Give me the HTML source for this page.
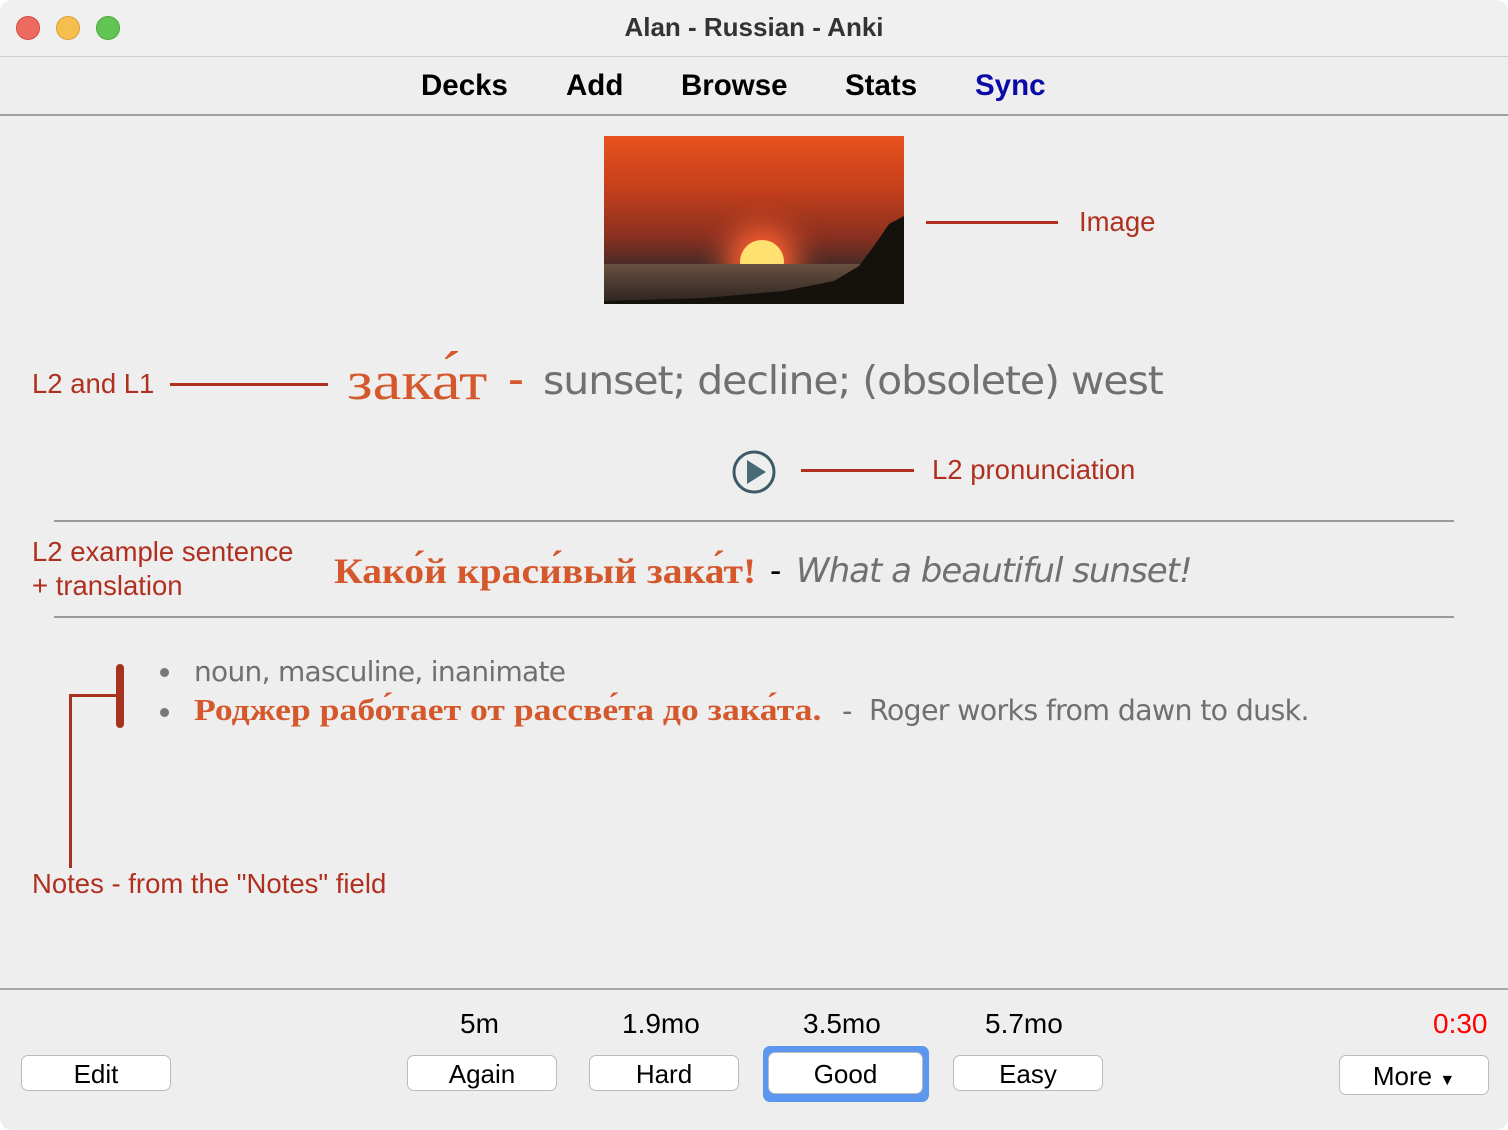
<!DOCTYPE html>
<html><head><meta charset="utf-8"><style>
body{margin:0;width:1508px;height:1130px;background:#fff;overflow:hidden;font-family:"Liberation Sans",sans-serif}
.win{position:absolute;left:0;top:0;width:1508px;height:1130px;background:#eeeeee;border-radius:12px;overflow:hidden}
.t{position:absolute;white-space:nowrap;transform-origin:0 0}
.ann{color:#b03020;font-size:27.5px}
.line{position:absolute;background:#b03020;height:3px}
.gray{color:#707070;font-family:"DejaVu Sans","Liberation Sans",sans-serif}
.or{color:#d4582c;font-family:"Liberation Serif",serif}
.btn{position:absolute;height:36px;background:#fff;border:1px solid #bbb;border-radius:7px;font-size:26px;text-align:center;line-height:36px;box-sizing:border-box}
</style></head><body><div class="win">
<div style="position:absolute;left:0;top:0;width:1508px;height:56px;background:#f0f0f0;border-bottom:1px solid #cfcfcf"></div>
<div style="position:absolute;left:16px;top:16px;width:24px;height:24px;border-radius:50%;background:#ee6a5f;border:1px solid #d24b40;box-sizing:border-box"></div>
<div style="position:absolute;left:56px;top:16px;width:24px;height:24px;border-radius:50%;background:#f5be4f;border:1px solid #d6a13a;box-sizing:border-box"></div>
<div style="position:absolute;left:96px;top:16px;width:24px;height:24px;border-radius:50%;background:#61c554;border:1px solid #4ba63e;box-sizing:border-box"></div>
<div class="t" style="left:0;width:1508px;text-align:center;top:12px;font-size:26px;font-weight:bold;color:#333">Alan - Russian - Anki</div>
<div style="position:absolute;left:0;top:114px;width:1508px;height:2px;background:#a0a0a0"></div>
<div class="t" style="left:421px;top:69px;font-size:29.5px;font-weight:bold">Decks</div>
<div class="t" style="left:566px;top:69px;font-size:29.5px;font-weight:bold">Add</div>
<div class="t" style="left:681px;top:69px;font-size:29.5px;font-weight:bold">Browse</div>
<div class="t" style="left:845px;top:69px;font-size:29.5px;font-weight:bold">Stats</div>
<div class="t" style="left:975px;top:69px;font-size:29.5px;font-weight:bold;color:#0a0aa8">Sync</div>

<div style="position:absolute;left:604px;top:136px;width:300px;height:168px;background:linear-gradient(#e8521e 0%,#c8401c 30%,#8a3020 60%,#3a2a28 80%,#1a1410 100%);overflow:hidden">
<div style="position:absolute;left:136px;top:104px;width:44px;height:44px;border-radius:50%;background:#ffe070;box-shadow:0 0 30px 14px #ff6030"></div>
<div style="position:absolute;left:0;top:128px;width:300px;height:40px;background:linear-gradient(#6a5040,#2a2420)"></div>
<svg style="position:absolute;left:0;top:0" width="300" height="168"><path d="M300 80 L285 88 L270 110 L255 130 L230 145 L180 155 L100 162 L0 165 L0 168 L300 168Z" fill="#15110d"/></svg>
</div>
<div class="line" style="left:926px;top:221px;width:132px"></div>
<div class="t ann" style="left:1079px;top:206px">Image</div>

<div class="t ann" style="left:32px;top:368px">L2 and L1</div>
<div class="line" style="left:170px;top:383px;width:158px"></div>
<div class="t or" style="left:347px;top:350px;font-size:54px;transform:scaleX(1.2)">зака́т</div>
<div class="t or" style="left:508px;top:352px;font-size:48px;font-family:'Liberation Sans'">-</div>
<div class="t gray" style="left:543px;top:359px;font-size:39px;letter-spacing:-1px;transform:scaleX(1.05)">sunset; decline; (obsolete) west</div>

<svg style="position:absolute;left:731px;top:449px" width="46" height="46"><circle cx="23" cy="23" r="20" fill="none" stroke="#3e5a66" stroke-width="3"/><path d="M16 11 L35 23 L16 35Z" fill="#486a76"/></svg>
<div class="line" style="left:801px;top:469px;width:113px"></div>
<div class="t ann" style="left:932px;top:454px">L2 pronunciation</div>

<div style="position:absolute;left:54px;top:520px;width:1400px;height:2px;background:#9a9a9a"></div>
<div style="position:absolute;left:54px;top:616px;width:1400px;height:2px;background:#9a9a9a"></div>
<div class="t ann" style="left:32px;top:535px;line-height:34px">L2 example sentence<br>+ translation</div>
<div class="t or" style="left:334px;top:550px;font-size:36px;font-weight:bold;transform:scaleX(1.1)">Како́й краси́вый зака́т!</div>
<div class="t" style="left:770px;top:552px;font-size:34px">-</div>
<div class="t gray" style="left:796px;top:551px;font-size:34px;font-style:italic;letter-spacing:-1px">What a beautiful sunset!</div>

<div style="position:absolute;left:116px;top:664px;width:8px;height:64px;border-radius:4px;background:#a83220"></div>
<div style="position:absolute;left:69px;top:694px;width:50px;height:3px;background:#a83220"></div>
<div style="position:absolute;left:69px;top:694px;width:3px;height:174px;background:#a83220"></div>
<div style="position:absolute;left:160px;top:668px;width:9px;height:9px;border-radius:50%;background:#777"></div>
<div style="position:absolute;left:160px;top:708px;width:9px;height:9px;border-radius:50%;background:#777"></div>
<div class="t gray" style="left:194px;top:655px;font-size:28px;letter-spacing:-0.7px">noun, masculine, inanimate</div>
<div class="t or" style="left:194px;top:692px;font-size:31px;font-weight:bold;transform:scaleX(1.15)">Роджер рабо́тает от рассве́та до зака́та.</div>
<div class="t gray" style="left:842px;top:694px;font-size:29px">-</div>
<div class="t gray" style="left:869px;top:694px;font-size:28.5px;letter-spacing:-0.7px">Roger works from dawn to dusk.</div>
<div class="t ann" style="left:32px;top:868px;font-size:27.5px">Notes - from the "Notes" field</div>

<div style="position:absolute;left:0;top:988px;width:1508px;height:2px;background:#a8a8a8"></div>
<div class="t" style="left:460px;top:1008px;font-size:28px">5m</div>
<div class="t" style="left:622px;top:1008px;font-size:28px">1.9mo</div>
<div class="t" style="left:803px;top:1008px;font-size:28px">3.5mo</div>
<div class="t" style="left:985px;top:1008px;font-size:28px">5.7mo</div>
<div class="t" style="left:1433px;top:1008px;font-size:28px;color:#f00">0:30</div>
<div class="btn" style="left:21px;top:1055px;width:150px">Edit</div>
<div class="btn" style="left:407px;top:1055px;width:150px">Again</div>
<div class="btn" style="left:589px;top:1055px;width:150px">Hard</div>
<div style="position:absolute;left:763px;top:1046px;width:166px;height:56px;border-radius:7px;background:#5b97ee"></div>
<div class="btn" style="left:768px;top:1052px;width:155px;height:42px;line-height:42px">Good</div>
<div class="btn" style="left:953px;top:1055px;width:150px">Easy</div>
<div class="btn" style="left:1339px;top:1055px;width:150px;height:40px;line-height:40px">More <span style="font-size:16px">▼</span></div>
</div></body></html>
